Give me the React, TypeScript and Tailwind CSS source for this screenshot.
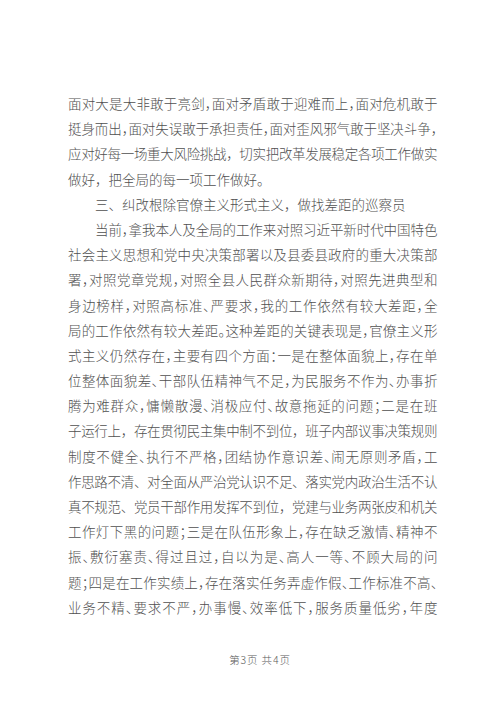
import React from 'react';

type Line = { text: string; justify?: boolean; indent?: boolean; halt?: boolean };

const lines: Line[] = [
    { text: '面对大是大非敢于亮剑，面对矛盾敢于迎难而上，面对危机敢于', justify: true, halt: true },
    { text: '挺身而出，面对失误敢于承担责任，面对歪风邪气敢于坚决斗争，', justify: true, halt: true },
    { text: '应对好每一场重大风险挑战，切实把改革发展稳定各项工作做实', justify: true },
    { text: '做好，把全局的每一项工作做好。' },
    { text: '三、纠改根除官僚主义形式主义，做找差距的巡察员', indent: true },
    { text: '当前，拿我本人及全局的工作来对照习近平新时代中国特色', justify: true, indent: true, halt: true },
    { text: '社会主义思想和党中央决策部署以及县委县政府的重大决策部', justify: true },
    { text: '署，对照党章党规，对照全县人民群众新期待，对照先进典型和', justify: true, halt: true },
    { text: '身边榜样，对照高标准、严要求，我的工作依然有较大差距，全', justify: true, halt: true },
    { text: '局的工作依然有较大差距。这种差距的关键表现是，官僚主义形', justify: true, halt: true },
    { text: '式主义仍然存在，主要有四个方面：一是在整体面貌上，存在单', justify: true, halt: true },
    { text: '位整体面貌差、干部队伍精神气不足，为民服务不作为、办事折', justify: true, halt: true },
    { text: '腾为难群众，慵懒散漫、消极应付、故意拖延的问题；二是在班', justify: true, halt: true },
    { text: '子运行上，存在贯彻民主集中制不到位，班子内部议事决策规则', justify: true },
    { text: '制度不健全、执行不严格，团结协作意识差、闹无原则矛盾，工', justify: true, halt: true },
    { text: '作思路不清、对全面从严治党认识不足、落实党内政治生活不认', justify: true },
    { text: '真不规范、党员干部作用发挥不到位，党建与业务两张皮和机关', justify: true },
    { text: '工作灯下黑的问题；三是在队伍形象上，存在缺乏激情、精神不', justify: true, halt: true },
    { text: '振、敷衍塞责、得过且过，自以为是、高人一等、不顾大局的问', justify: true, halt: true },
    { text: '题；四是在工作实绩上，存在落实任务弄虚作假、工作标准不高、', justify: true, halt: true },
    { text: '业务不精、要求不严，办事慢、效率低下，服务质量低劣，年度', justify: true, halt: true },
];

const TextLine = ({ line }: { line: Line }) => {
    let cls = 'h-[25.2px] leading-[25.2px]';
    if (line.indent) cls += ' pl-[2em]';
    if (line.justify) cls += ' text-justify [text-align-last:justify] tracking-[-0.03em]';
    else cls += ' whitespace-nowrap';
    if (line.halt) cls += ' [font-feature-settings:"halt"]';
    return <div className={cls}>{line.text}</div>;
};

const App = () => {
    return (
        <div className="w-[500px] h-[707px] bg-white overflow-hidden font-['Noto_Sans_CJK_SC',sans-serif] text-[#505050] font-light">
            <div className="pt-[91px] pl-[68px]">
                {/* Body text */}
                <div className="w-[369px] text-[13.5px]">
                    {lines.map((line, i) => (
                        <TextLine key={i} line={line} />
                    ))}
                </div>

                {/* Page footer */}
                <div className="w-[384px] mt-[33px] text-center text-[10.5px] leading-[14px] tracking-[0.08em] text-[#5a5a5a]">
                    第3页 共4页
                </div>
            </div>
        </div>
    );
};

export default App;
